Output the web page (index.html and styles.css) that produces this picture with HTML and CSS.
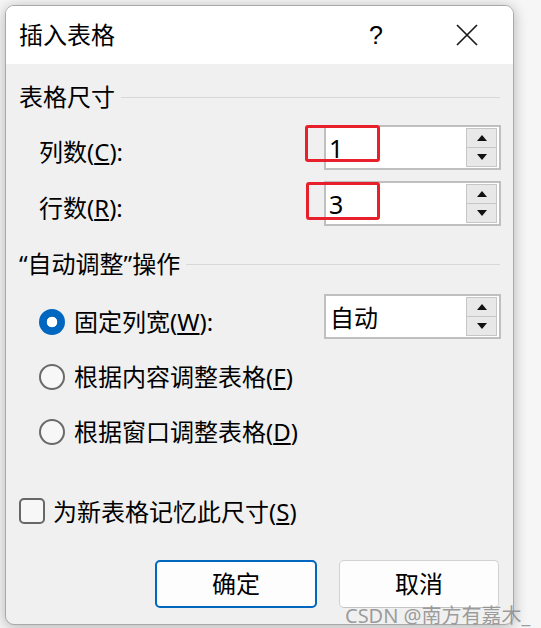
FILE: index.html
```html
<!DOCTYPE html>
<html lang="zh-CN">
<head>
<meta charset="utf-8">
<title>插入表格</title>
<link rel="stylesheet" href="styles.css">
</head>
<body>
<div class="page">
  <div class="dialog">
    <div class="titlebar">
      <span class="title">插入表格</span>
      <span class="help">?</span>
      <span class="close">
        <svg width="22" height="22" viewBox="0 0 22 22"><path d="M1 1 L21 21 M21 1 L1 21" stroke="#1a1a1a" stroke-width="1.7" fill="none"/></svg>
      </span>
    </div>
    <div class="body">
      <div class="group-head"><span>表格尺寸</span><div class="rule"></div></div>

      <div class="row row-field first">
        <span class="label">列数(<u>C</u>):</span>
        <div class="spin">
          <span class="value">1</span>
          <div class="spinner"><div class="sbtn"><i class="up"></i></div><div class="sbtn"><i class="down"></i></div></div>
          <div class="mark mark1"></div>
        </div>
      </div>
      <div class="row row-field second">
        <span class="label">行数(<u>R</u>):</span>
        <div class="spin">
          <span class="value">3</span>
          <div class="spinner"><div class="sbtn"><i class="up"></i></div><div class="sbtn"><i class="down"></i></div></div>
          <div class="mark mark2"></div>
        </div>
      </div>

      <div class="group-head head2"><span>“自动调整”操作</span><div class="rule"></div></div>

      <div class="row row-radio r-first">
        <span class="radio checked"></span>
        <span class="label">固定列宽(<u>W</u>):</span>
        <div class="spin">
          <span class="value cjk">自动</span>
          <div class="spinner"><div class="sbtn"><i class="up"></i></div><div class="sbtn"><i class="down"></i></div></div>
        </div>
      </div>
      <div class="row row-radio">
        <span class="radio"></span>
        <span class="label">根据内容调整表格(<u>F</u>)</span>
      </div>
      <div class="row row-radio">
        <span class="radio"></span>
        <span class="label">根据窗口调整表格(<u>D</u>)</span>
      </div>

      <div class="check-row">
        <span class="checkbox"></span>
        <span class="label">为新表格记忆此尺寸(<u>S</u>)</span>
      </div>

      <div class="buttons">
        <div class="btn primary">确定</div>
        <div class="btn">取消</div>
      </div>
    </div>
  </div>
  <div class="watermark">CSDN @南方有嘉木_</div>
</div>
</body>
</html>
```

FILE: styles.css
```css
* { box-sizing: border-box; }
html, body { margin: 0; padding: 0; }
body {
  width: 541px;
  height: 628px;
  overflow: hidden;
  background: #f6f6f6;
  font-family: "Noto Sans", "Noto Sans CJK SC", sans-serif;
  font-size: 24px;
  color: #000;
}
.page {
  position: relative;
  padding: 5px 0 0 5px;
  width: 541px;
  height: 628px;
}
.dialog {
  width: 509px;
  height: 620px;
  border: 1px solid #a9a9a9;
  border-radius: 9px;
  overflow: hidden;
  background: #f0f0f0;
  box-shadow: 0 2px 14px rgba(0,0,0,0.28);
  display: flex;
  flex-direction: column;
}
.titlebar {
  height: 58px;
  background: #ffffff;
  display: flex;
  align-items: center;
  padding-left: 13px;
  padding-right: 23px;
  flex: none;
}
.title { flex: 1; line-height: 1; }
.help {
  width: 40px;
  text-align: center;
  line-height: 1;
  font-family: "Liberation Sans", "Noto Sans", sans-serif;
  font-size: 25px;
}
.close {
  width: 46px;
  margin-left: 48px;
  display: flex;
  justify-content: center;
  align-items: center;
}
.close svg { display: block; }

.body {
  flex: 1;
  padding: 18px 12px 0 13px;
  display: flex;
  flex-direction: column;
}
.group-head {
  height: 30px;
  display: flex;
  align-items: center;
  line-height: 1;
}
.group-head .rule {
  flex: 1;
  height: 1px;
  background: #d8d8d8;
  margin-left: 6px;
  margin-right: 1px;
}
.head2 { margin-top: 23px; }

.row {
  height: 45px;
  display: flex;
  align-items: center;
  padding-left: 20px;
}
.row-field.first { margin-top: 13px; }
.row-field.second { margin-top: 11px; }
.row-field .label { padding-top: 9px; line-height: 1; }
.row-radio { margin-top: 10px; }
.row-radio.r-first { margin-top: 15px; }
.row-radio .label { padding-top: 10px; line-height: 1; margin-left: 9px; }
.row-radio .radio { margin-top: 10px; }

.spin {
  position: relative;
  margin-left: auto;
  width: 177px;
  height: 45px;
  background: #fff;
  border: 2px solid #bfbfbf;
  display: flex;
  align-items: center;
}
.value {
  flex: 1;
  padding-left: 3px;
  padding-top: 2px;
  font-size: 25px;
  line-height: 1;
}
.value.cjk { padding-left: 4px; font-size: 24px; }
.spinner {
  width: 31px;
  height: 39px;
  margin-right: 2px;
  display: flex;
  flex-direction: column;
}
.sbtn {
  flex: 1;
  background: #e8e8e8;
  border: 1px solid #c6c6c6;
  display: flex;
  align-items: center;
  justify-content: center;
}
.sbtn + .sbtn { border-top: 1px solid #c6c6c6; margin-top: -1px; }
.sbtn i { width: 0; height: 0; border-left: 5px solid transparent; border-right: 5px solid transparent; }
.sbtn i.up { border-bottom: 6px solid #111; }
.sbtn i.down { border-top: 6px solid #111; }

.mark {
  position: absolute;
  border: 3px solid #e8202b;
  border-radius: 3px;
}
.mark1 { left: -21px; top: -2px; width: 75px; height: 37px; }
.mark2 { left: -20px; top: -1px; width: 74px; height: 38px; }

.radio {
  width: 26px;
  height: 26px;
  border-radius: 50%;
  border: 2px solid #6a6a6a;
  background: #f7f7f7;
  flex: none;
}
.radio.checked {
  border: none;
  background: radial-gradient(circle, #ffffff 0 5px, #0067c0 5.6px);
}

.check-row {
  margin-top: 47px;
  height: 30px;
  display: flex;
  align-items: center;
}
.checkbox {
  width: 26px;
  height: 26px;
  border: 2px solid #676767;
  border-radius: 5px;
  background: #f7f7f7;
  flex: none;
}
.check-row .label { margin-left: 8px; line-height: 1; padding-top: 2px; }

.buttons {
  margin-top: 34px;
  display: flex;
  justify-content: flex-end;
  gap: 22px;
  padding-right: 2px;
}
.btn {
  width: 160px;
  height: 48px;
  border: 1px solid #d2d2d2;
  border-bottom-color: #c4c4c4;
  border-radius: 5px;
  background: #fdfdfd;
  display: flex;
  align-items: center;
  justify-content: center;
  line-height: 1;
}
.btn.primary {
  width: 162px;
  border: 2px solid #0067c0;
}

.watermark {
  position: absolute;
  left: 345px;
  top: 604px;
  font-size: 20px;
  line-height: 1.2;
  color: rgba(140,140,140,0.85);
  white-space: nowrap;
}
```
